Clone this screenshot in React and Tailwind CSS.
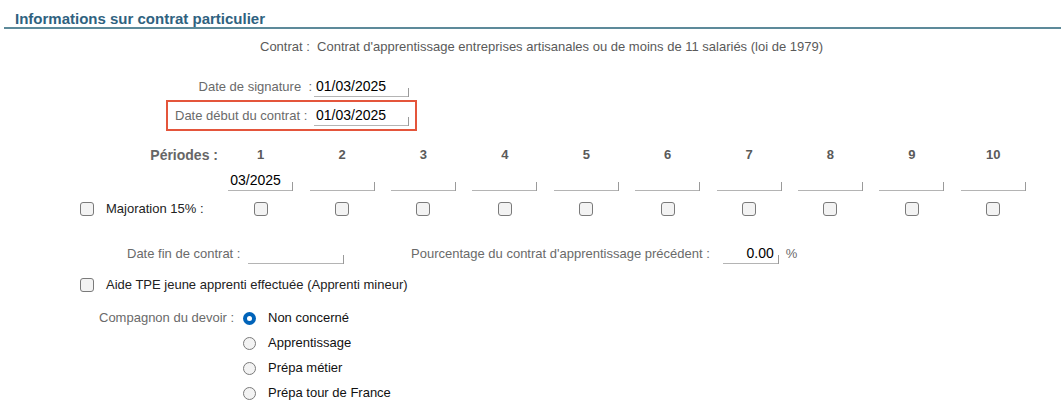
import React from "react";

const periods = [1, 2, 3, 4, 5, 6, 7, 8, 9, 10];

function Field({ value = "", w = "w-[95px]", align = "text-left" }) {
  return (
    <div className={`flex items-end ${w}`}>
      <div className={`flex-1 h-[20px] border-b border-[#b4b4b4] text-[14px] leading-[19px] text-black pl-[2px] ${align}`}>
        {value}
      </div>
      <div className="w-px h-[9px] bg-[#9a9a9a]" />
    </div>
  );
}

function Check() {
  return <div className="w-[14px] h-[14px] rounded-[3px] border border-[#7a7a7a] bg-[#f3f3f3]" />;
}

function Radio({ checked }) {
  if (checked)
    return (
      <div className="w-[13px] h-[13px] rounded-full bg-[#0063b9] flex items-center justify-center">
        <div className="w-[5px] h-[5px] rounded-full bg-white" />
      </div>
    );
  return <div className="w-[13px] h-[13px] rounded-full border border-[#7a7a7a] bg-[#f3f3f3]" />;
}

export default function App() {
  return (
    <div className="w-[1061px] h-[415px] bg-white overflow-hidden font-['Liberation_Sans',Arial,sans-serif] text-[13px] text-[#6a6a6a]">
      <div className="pt-[10px] pl-[15px] h-[27px] text-[15px] leading-[18px] font-bold text-[#2f6280]">
        Informations sur contrat particulier
      </div>
      <div className="ml-[4px] h-[2px] bg-[#5d8a9a]" />

      <div className="mt-[8px] h-[20px] pl-[260px] leading-[20px] text-[#5a5a5a] whitespace-nowrap">
        Contrat :&nbsp; Contrat d'apprentissage entreprises artisanales ou de moins de 11 salariés (loi de 1979)
      </div>

      <div className="mt-[18px] ml-[166px] w-[250px] h-[22px] flex items-end">
        <div className="w-[148px] pr-[2px] text-right leading-[20px] whitespace-nowrap">Date de signature&nbsp; :</div>
        <Field value="01/03/2025" />
      </div>

      <div className="mt-[3px] ml-[166px] w-[251px] h-[31px] border-2 border-[#e4553b] flex items-center">
        <div className="w-[146px] pl-[7px] whitespace-nowrap leading-[20px]">Date début du contrat :</div>
        <Field value="01/03/2025" />
      </div>

      <div className="mt-[14px] flex h-[20px] items-center">
        <div className="w-[220px] pr-[2px] text-right text-[14px] font-bold text-[#666]">Périodes :</div>
        <div className="grid grid-cols-[repeat(10,81.4px)]">
          {periods.map((p) => (
            <div key={p} className="text-center text-[13px] font-bold text-[#5a5a5a]">{p}</div>
          ))}
        </div>
      </div>

      <div className="mt-[4px] flex h-[22px] items-end">
        <div className="w-[220px]" />
        <div className="grid grid-cols-[repeat(10,81.4px)]">
          {periods.map((p) => (
            <div key={p} className="flex justify-center">
              <Field w="w-[65px]" value={p === 1 ? "03/2025" : ""} />
            </div>
          ))}
        </div>
      </div>

      <div className="mt-[10px] flex h-[16px] items-center">
        <div className="w-[220px] flex items-center pl-[80px]">
          <Check />
          <span className="ml-[12px] text-[#222] whitespace-nowrap">Majoration 15% :</span>
        </div>
        <div className="grid grid-cols-[repeat(10,81.4px)]">
          {periods.map((p) => (
            <div key={p} className="flex justify-center">
              <Check />
            </div>
          ))}
        </div>
      </div>

      <div className="mt-[25px] flex h-[22px] items-end">
        <div className="w-[248px] pl-[127px] leading-[20px] whitespace-nowrap">Date fin de contrat :</div>
        <Field w="w-[96px]" />
        <div className="ml-[67px] leading-[20px] whitespace-nowrap">Pourcentage du contrat d'apprentissage précédent :</div>
        <div className="ml-[13px]">
          <Field w="w-[56px]" value="0.00" align="text-right pr-[4px]" />
        </div>
        <div className="ml-[7px] leading-[20px]">%</div>
      </div>

      <div className="mt-[13px] flex h-[16px] items-center pl-[80px]">
        <Check />
        <span className="ml-[12px] text-[#222]">Aide TPE jeune apprenti effectuée (Apprenti mineur)</span>
      </div>

      <div className="mt-[16px] flex">
        <div className="w-[243px] pl-[99px] h-[18px] leading-[18px] whitespace-nowrap">Compagnon du devoir :</div>
        <div className="flex flex-col">
          {[
            ["Non concerné", true],
            ["Apprentissage", false],
            ["Prépa métier", false],
            ["Prépa tour de France", false],
          ].map(([l, c]) => (
            <div key={l} className="flex items-center h-[18px] mb-[7px]">
              <Radio checked={c} />
              <span className="ml-[12px] text-[#111]">{l}</span>
            </div>
          ))}
        </div>
      </div>
    </div>
  );
}
